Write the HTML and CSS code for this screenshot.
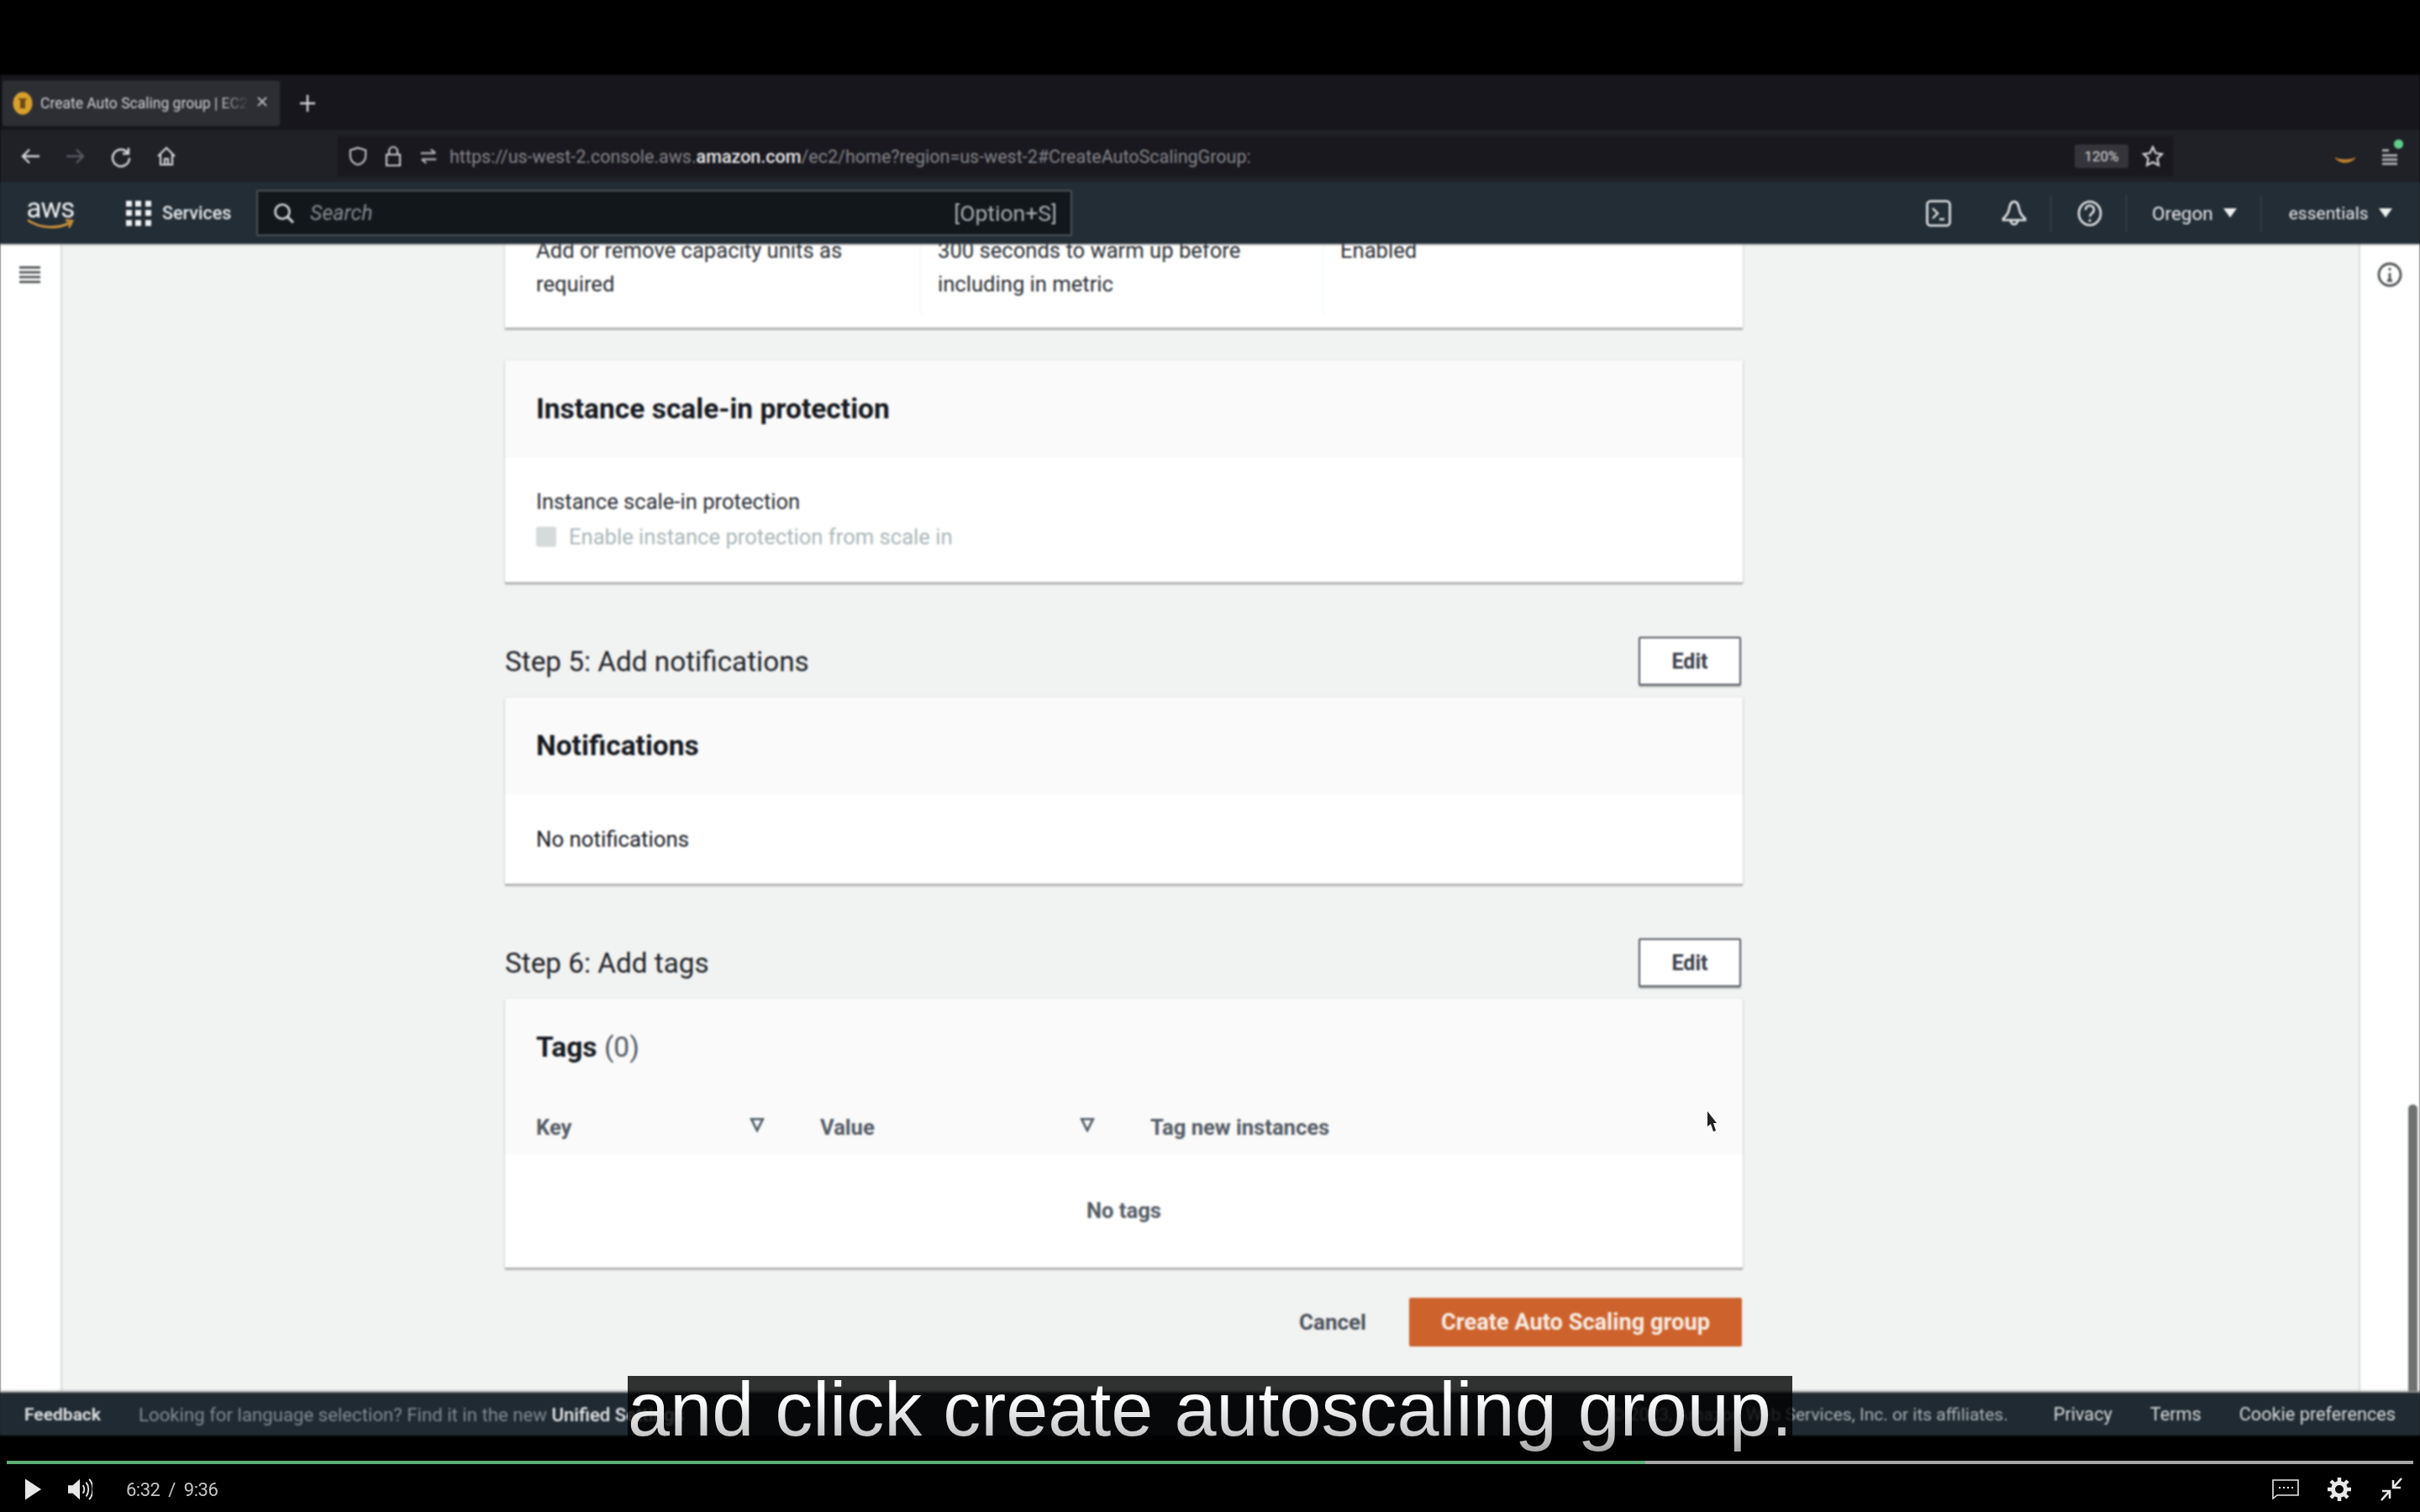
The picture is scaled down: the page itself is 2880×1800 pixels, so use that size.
FILE: index.html
```html
<!DOCTYPE html>
<html lang="en">
<head>
    <meta charset="UTF-8">
    <title>Create Auto Scaling group | EC2</title>
    <link rel="stylesheet" href="styles.css">
</head>
<body>
    <div class="screen">
        <!-- Browser tabs -->
        <div class="tabbar">
            <div class="tab">
                <svg class="favicon" viewBox="0 0 24 28"><ellipse cx="12" cy="14" rx="11.5" ry="13.5" fill="#d9a02c"/><path d="M6 8h12l-3 2v10h-6v-10z" fill="#6b4a12"/></svg>
                <span class="tab-title">Create Auto Scaling group | EC2</span>
                <svg class="tab-close" viewBox="0 0 14 12"><path d="M2 1l10 10M12 1L2 11" stroke="#b9babd" stroke-width="1.8" fill="none"/></svg>
            </div>
            <svg class="tab-plus" viewBox="0 0 20 24"><path d="M10 2v20M1 12h18" stroke="#d5d5d7" stroke-width="2.4" fill="none"/></svg>
        </div>

        <!-- Browser toolbar -->
        <div class="toolbar">
            <div class="nav-buttons">
                <svg viewBox="0 0 24 24"><path d="M23 12H3M11 4l-8 8 8 8" stroke="#d8d8da" stroke-width="2.4" fill="none"/></svg>
                <svg viewBox="0 0 24 24"><path d="M1 12h20M13 4l8 8-8 8" stroke="#5a5a60" stroke-width="2.4" fill="none"/></svg>
                <svg viewBox="0 0 24 24"><path d="M20 8a10 10 0 1 0 2 6M21 2v7h-7" stroke="#d8d8da" stroke-width="2.4" fill="none"/></svg>
                <svg viewBox="0 0 24 24"><path d="M2 12L12 2l10 10M5 10v12h14V10M10 22v-7h4v7" stroke="#d8d8da" stroke-width="2.2" fill="none"/></svg>
            </div>
            <div class="urlbar">
                <svg class="url-icon" viewBox="0 0 24 26"><path d="M12 2l10 3v8c0 6-5 10-10 11C7 23 2 19 2 13V5z" stroke="#c8c8cb" stroke-width="2.2" fill="none"/></svg>
                <svg class="url-icon" viewBox="0 0 22 26"><path d="M6 11V7a5 5 0 0 1 10 0v4M3 11h16v13H3z" stroke="#c8c8cb" stroke-width="2.2" fill="none"/></svg>
                <svg class="url-icon" viewBox="0 0 24 22"><path d="M2 7h18M15 2l6 5M22 15H4M9 20l-6-5" stroke="#b5b5b9" stroke-width="2.4" fill="none"/></svg>
                <div class="url-text">https://us-west-2.console.aws.<b>amazon.com</b>/ec2/home?region=us-west-2#CreateAutoScalingGroup:</div>
                <span class="zoom-badge">120%</span>
                <svg class="star" viewBox="0 0 26 26"><path d="M13 2l3.4 7.3 7.6 1-5.600 5.400 1.500 8L13 20l-6.900 3.700 1.500-8L2 10.300l7.600-1z" stroke="#d8d8da" stroke-width="2.2" fill="none"/></svg>
            </div>
            <div class="extensions">
                <svg class="smile" viewBox="0 0 26 10"><path d="M1 2c6 7 18 7 24 0-6 3-18 3-24 0z" fill="#c98a2c" stroke="#c98a2c"/></svg>
                <span class="menu-wrap">
                    <svg class="menu-icon" viewBox="0 0 20 22"><path d="M1 4h8M1 10h18M1 15h18M1 20h18" stroke="#c2c2c5" stroke-width="2.6"/></svg>
                    <i class="menu-dot"></i>
                </span>
            </div>
        </div>

        <!-- AWS console header -->
        <header class="console-nav">
            <div class="aws-logo">
                <span class="aws-word">aws</span>
                <svg viewBox="0 0 56 14"><path d="M1 2c14 10 36 11 50 3M46 2l8 1-4 8" stroke="#d99a3c" stroke-width="2.600" fill="none"/></svg>
            </div>
            <svg class="services-grid" viewBox="0 0 30 30" fill="#eef0f1">
                <rect x="0" y="0" width="7" height="7"/><rect x="11" y="0" width="7" height="7"/><rect x="23" y="0" width="7" height="7"/>
                <rect x="0" y="11" width="7" height="7"/><rect x="11" y="11" width="7" height="7"/><rect x="23" y="11" width="7" height="7"/>
                <rect x="0" y="23" width="7" height="7"/><rect x="11" y="23" width="7" height="7"/><rect x="23" y="23" width="7" height="7"/>
            </svg>
            <span class="services-label">Services</span>
            <div class="search">
                <svg viewBox="0 0 26 26"><circle cx="11" cy="11" r="8.500" stroke="#d4d6d8" stroke-width="2.600" fill="none"/><path d="M17 17l7 7" stroke="#d4d6d8" stroke-width="3"/></svg>
                <span class="search-hint">Search</span>
                <span class="search-key">[Option+S]</span>
            </div>
            <div class="nav-right">
                <svg class="nav-icon" viewBox="0 0 30 32"><rect x="1.500" y="1.500" width="27" height="29" rx="4" stroke="#e6e8ea" stroke-width="2.600" fill="none"/><path d="M8 10l6 6-6 6M16 23h6" stroke="#e6e8ea" stroke-width="2.400" fill="none"/></svg>
                <svg class="nav-icon nav-bell" viewBox="0 0 30 32"><path d="M15 2c-4 0-5 4-6 9-1 5-3 8-7 11v2h26v-2c-4-3-6-6-7-11-1-5-2-9-6-9zM11 25a4 4 0 0 0 8 0" stroke="#e6e8ea" stroke-width="2.600" fill="none"/></svg>
                <i class="nav-sep"></i>
                <svg class="nav-icon nav-help" viewBox="0 0 30 32"><ellipse cx="15" cy="16" rx="13" ry="14" stroke="#e6e8ea" stroke-width="2.600" fill="none"/><path d="M10 12c0-7 10-7 10 0 0 4-5 4-5 8M15 23v3" stroke="#e6e8ea" stroke-width="2.600" fill="none"/></svg>
                <i class="nav-sep"></i>
                <span class="nav-menu nav-region">Oregon<i class="caret"></i></span>
                <i class="nav-sep"></i>
                <span class="nav-menu nav-account">essentials<i class="caret"></i></span>
            </div>
        </header>

        <div class="console-body">
            <aside class="rail rail-left">
                <svg class="hamburger" viewBox="0 0 26 24"><path d="M0 3h26M0 9h26M0 15h26M0 21h26" stroke="#4f5253" stroke-width="2.800"/></svg>
            </aside>

            <main class="content">
                <section class="card card-scaling">
                    <div class="scaling-col">Add or remove capacity units as required</div>
                    <div class="scaling-col">300 seconds to warm up before including in metric</div>
                    <div class="scaling-col">Enabled</div>
                </section>

                <section class="card card-protection">
                    <h2 class="card-header">Instance scale-in protection</h2>
                    <div class="card-body">
                        <div class="field-label">Instance scale-in protection</div>
                        <label class="check-row"><i class="checkbox"></i>Enable instance protection from scale in</label>
                    </div>
                </section>

                <div class="step-row">
                    <h3 class="step-title">Step 5: Add notifications</h3>
                    <button class="btn-edit">Edit</button>
                </div>
                <section class="card">
                    <h2 class="card-header">Notifications</h2>
                    <div class="card-body card-body-short">No notifications</div>
                </section>

                <div class="step-row">
                    <h3 class="step-title">Step 6: Add tags</h3>
                    <button class="btn-edit">Edit</button>
                </div>
                <section class="card">
                    <h2 class="card-header">Tags <span class="count">(0)</span></h2>
                    <div class="tags-head">
                        <div class="tags-cell">Key<svg viewBox="0 0 16 16"><path d="M2 2h12l-6 12z" stroke="#4f5b66" stroke-width="2.400" fill="none"/></svg></div>
                        <div class="tags-cell">Value<svg viewBox="0 0 16 16"><path d="M2 2h12l-6 12z" stroke="#4f5b66" stroke-width="2.400" fill="none"/></svg></div>
                        <div class="tags-cell">Tag new instances</div>
                    </div>
                    <div class="tags-empty">No tags</div>
                </section>

                <div class="form-actions">
                    <button class="btn-cancel">Cancel</button>
                    <button class="btn-create">Create Auto Scaling group</button>
                </div>
            </main>

            <aside class="rail rail-right">
                <svg class="info-icon" viewBox="0 0 30 30"><circle cx="15" cy="15" r="13" stroke="#4d5052" stroke-width="2.800" fill="none"/><path d="M15 7v3M15 13v9M12 22h6" stroke="#4d5052" stroke-width="2.800" fill="none"/></svg>
                <i class="scroll-thumb"></i>
            </aside>
        </div>

        <footer class="console-footer">
            <span class="footer-feedback">Feedback</span>
            <span class="footer-note">Looking for language selection? Find it in the new <b>Unified Settings</b></span>
            <span class="footer-copy">© 2023, Amazon Web Services, Inc. or its affiliates.</span>
            <span class="footer-link">Privacy</span>
            <span class="footer-link">Terms</span>
            <span class="footer-link">Cookie preferences</span>
        </footer>
    </div>

    <!-- Video player -->
    <div class="player">
        <div class="progress"><div class="progress-fill"></div></div>
        <div class="player-row">
            <svg class="ctl-play" viewBox="0 0 22 28"><path d="M1 1l20 13L1 27z" fill="#e8e8e8"/></svg>
            <svg class="ctl-volume" viewBox="0 0 32 30"><path d="M1 10h6l9-8v26l-9-8H1z" fill="#e8e8e8"/><path d="M20 10c2 3 2 7 0 10M24 6c4 5 4 13 0 18M28 2c6 7 6 19 0 26" stroke="#e8e8e8" stroke-width="2" fill="none"/></svg>
            <span class="ctl-time">6:32&nbsp; /&nbsp; 9:36</span>
            <div class="player-right">
                <svg class="ctl-captions" viewBox="0 0 32 24"><path d="M1 1h30v18H6l-5 4z" stroke="#e8e8e8" stroke-width="1.600" fill="none"/><path d="M8 10h2M13 10h2M18 10h2M23 10h2" stroke="#e8e8e8" stroke-width="2"/></svg>
                <svg class="ctl-gear" viewBox="0 0 28 28"><circle cx="14" cy="14" r="7.500" stroke="#e8e8e8" stroke-width="5" fill="none"/><path d="M14 0v6M14 22v6M0 14h6M22 14h6M4 4l4 4M20 20l4 4M24 4l-4 4M8 20l-4 4" stroke="#e8e8e8" stroke-width="4.500"/></svg>
                <svg class="ctl-exit" viewBox="0 0 28 28"><path d="M26 1l-9 10M16 3v9h9M2 27l9-10M12 25v-9H3" stroke="#e8e8e8" stroke-width="2.600" fill="none"/></svg>
            </div>
        </div>
    </div>

    <!-- Pointer and burned-in caption sit over the video -->
    <svg class="pointer" viewBox="0 0 14 26"><path d="M1 1l11 14H8l3 9-3 1-3-9-4 3z" fill="#222"/></svg>
    <div class="caption"><span class="caption-text">and click create autoscaling group.</span></div>
</body>
</html>
```

FILE: styles.css
```css
* {
    box-sizing: border-box;
}

html, body {
    margin: 0;
    height: 1800px;
    overflow: hidden;
    background-color: #000;
}

body {
    padding-top: 89px;
    font-family: 'Roboto', 'Liberation Sans', sans-serif;
    position: relative;
}

i {
    display: block;
    font-style: normal;
}

svg {
    display: block;
    flex: none;
}

h2, h3 {
    margin: 0;
}

button {
    font-family: inherit;
    border: none;
    cursor: pointer;
}

.screen {
    display: flex;
    flex-direction: column;
    height: 1620px;
    filter: blur(0.8px);
}

/* browser tabs */
.tabbar {
    display: flex;
    align-items: center;
    height: 66px;
    padding: 7px 0 5px 3px;
    background-color: #17161c;
}

.tab {
    display: flex;
    align-items: center;
    width: 330px;
    height: 54px;
    padding: 0 14px 0 12px;
    background-color: #2d2e34;
    border-radius: 3px;
}

.favicon {
    width: 24px;
    height: 28px;
    margin-right: 9px;
}

.tab-title {
    flex: 1;
    overflow: hidden;
    white-space: nowrap;
    font-size: 17.5px;
    color: #d2d2d5;
    -webkit-mask-image: linear-gradient(to right, #000 85%, transparent);
    mask-image: linear-gradient(to right, #000 85%, transparent);
}

.tab-close {
    width: 14px;
    height: 12px;
    margin-left: 8px;
    margin-top: -4px;
}

.tab-plus {
    width: 20px;
    height: 24px;
    margin-left: 23px;
}

/* browser toolbar */
.toolbar {
    display: flex;
    align-items: center;
    height: 62px;
    background-color: #1f2127;
}

.nav-buttons {
    display: flex;
    align-items: center;
    gap: 30px;
    width: 402px;
    padding-left: 24px;
}

.nav-buttons svg {
    width: 24px;
    height: 28px;
}

.urlbar {
    display: flex;
    align-items: center;
    width: 2184px;
    height: 48px;
    padding: 0 11px 0 13px;
    background-color: #19181e;
}

.url-icon {
    width: 22px;
    height: 26px;
    margin-right: 20px;
}

.url-text {
    flex: 1;
    margin-left: -6px;
    font-size: 21.5px;
    color: #85858b;
    white-space: nowrap;
}

.url-text b {
    color: #e8e8ea;
    font-weight: 500;
}

.zoom-badge {
    width: 64px;
    height: 28px;
    margin-right: 16px;
    background-color: #35343b;
    border-radius: 3px;
    font-size: 17px;
    line-height: 28px;
    text-align: center;
    color: #d8d8da;
}

.star {
    width: 26px;
    height: 26px;
}

.extensions {
    flex: 1;
    display: flex;
    align-items: center;
    justify-content: flex-end;
    padding-right: 26px;
}

.smile {
    width: 26px;
    height: 10px;
    margin-top: 10px;
    margin-right: 30px;
}

.menu-wrap {
    position: relative;
}

.menu-icon {
    width: 20px;
    height: 24px;
}

.menu-dot {
    position: absolute;
    top: -8px;
    right: -6px;
    width: 11px;
    height: 11px;
    border-radius: 50%;
    background-color: #5fd08a;
}

/* console header */
.console-nav {
    display: flex;
    align-items: center;
    height: 73px;
    padding-left: 32px;
    background-color: #222d36;
    box-shadow: 0 1px 2px #666;
    position: relative;
    z-index: 1;
    color: #e8eaec;
}

.aws-logo {
    display: flex;
    flex-direction: column;
    align-items: center;
    width: 56px;
    margin-right: 62px;
}

.aws-logo svg {
    width: 56px;
    height: 14px;
    margin-top: -3px;
}

.aws-word {
    font-size: 33px;
    line-height: 30px;
    letter-spacing: -1px;
    color: #eef0f1;
}

.services-grid {
    width: 30px;
    height: 30px;
    margin-right: 13px;
}

.services-label {
    width: 112px;
    font-size: 21.5px;
    font-weight: 500;
}

.search {
    display: flex;
    align-items: center;
    width: 971px;
    height: 55px;
    padding: 0 16px 0 18px;
    background-color: #12171c;
    border: 2px solid #4b5359;
    border-radius: 2px;
}

.search svg {
    width: 26px;
    height: 26px;
    margin-right: 18px;
}

.search-hint {
    flex: 1;
    font-size: 25px;
    font-style: italic;
    color: #878c91;
}

.search-key {
    font-size: 26.5px;
    color: #a9adb1;
}

.nav-right {
    flex: 1;
    display: flex;
    align-items: center;
    padding-left: 1016px;
}

.nav-icon {
    width: 30px;
    height: 32px;
}

.nav-bell {
    margin-left: 60px;
}

.nav-help {
    margin-left: 31px;
}

.nav-sep {
    width: 1px;
    height: 44px;
    margin-left: 28px;
    background-color: #3a464f;
}

.nav-menu {
    display: flex;
    align-items: center;
    white-space: nowrap;
}

.nav-region {
    margin-left: 30px;
    font-size: 22.5px;
}

.nav-account {
    margin-left: 33px;
    font-size: 21px;
}

.caret {
    width: 0;
    height: 0;
    margin-left: 12px;
    border-left: 8px solid transparent;
    border-right: 8px solid transparent;
    border-top: 11px solid #eef0f1;
}

/* console body */
.console-body {
    flex: 1;
    display: flex;
    overflow: hidden;
    background-color: #f1f2f2;
}

.rail {
    flex: none;
    width: 73px;
    background-color: #fff;
    display: flex;
    flex-direction: column;
}

.rail-left {
    width: 74px;
    border-right: 2px solid #d9dbdb;
    padding: 25px 0 0 23px;
}

.rail-right {
    border-left: 2px solid #d9dbdb;
    padding: 22px 3px 0 20px;
}

.hamburger {
    width: 25px;
    height: 24px;
}

.info-icon {
    width: 30px;
    height: 30px;
}

.scroll-thumb {
    width: 11px;
    height: 343px;
    margin-top: auto;
    align-self: flex-end;
    border-radius: 5px 5px 0 0;
    background-color: #6f7170;
}

.content {
    flex: 1;
    padding-left: 527px;
    padding-right: 733px;
    margin-top: -12px;
    font-size: 25.6px;
    color: #16191f;
}

.card {
    background-color: #fff;
    box-shadow: 0 3px 1px rgba(0, 0, 0, 0.18), 0 1px 3px rgba(0, 0, 0, 0.2);
}

.card-header {
    height: 116px;
    padding: 0 37px;
    background-color: #fafafa;
    font-size: 33.5px;
    font-weight: 700;
    line-height: 116px;
}

.count {
    font-weight: 400;
    color: #545b64;
}

.card-scaling {
    display: grid;
    grid-template-columns: 495px 479px 1fr;
    height: 112px;
    line-height: 40px;
    margin-bottom: 39px;
}

.scaling-col {
    padding: 0 70px 0 37px;
    height: 97px;
    color: #2a2e33;
    border-right: 1px solid #f1f2f3;
}

.scaling-col + .scaling-col {
    padding-left: 20px;
}

.scaling-col:last-child {
    border-right: none;
}

.card-protection .card-body {
    height: 148px;
    padding: 34px 37px 0;
}

.field-label {
    line-height: 36px;
    color: #2a2e33;
}

.check-row {
    display: flex;
    align-items: center;
    margin-top: 9px;
    color: #aab7b8;
}

.checkbox {
    width: 24px;
    height: 24px;
    margin-right: 15px;
    background-color: #d5dbdb;
    border-radius: 3px;
}

.card-body-short {
    height: 106px;
    padding: 35px 37px 0;
    font-size: 25.8px;
    line-height: 36px;
}

.step-row {
    display: flex;
    align-items: center;
    justify-content: space-between;
    height: 58px;
    margin-top: 65px;
    margin-bottom: 14px;
}

.step-title {
    font-size: 33.3px;
    font-weight: 400;
    color: #1f2328;
}

.btn-edit {
    width: 122px;
    height: 58px;
    margin-right: 2px;
    background-color: #fff;
    border: 2px solid #545b64;
    border-radius: 2px;
    box-shadow: 0 2px 1px rgba(0, 0, 0, 0.25);
    font-size: 25px;
    font-weight: 700;
    color: #3a4048;
}

.tags-head {
    display: grid;
    grid-template-columns: 338px 393px 1fr;
    align-items: center;
    height: 70px;
    padding-left: 37px;
    background-color: #fafafa;
    font-weight: 700;
    color: #545b64;
    padding-top: 3px;
}

.tags-cell {
    display: flex;
    align-items: center;
    justify-content: space-between;
    padding-right: 66px;
}

.tags-cell svg {
    width: 18px;
    height: 18px;
    margin-top: -6px;
}

.tags-empty {
    height: 134px;
    line-height: 132px;
    text-align: center;
    font-weight: 700;
    color: #545b64;
}

.form-actions {
    display: flex;
    align-items: center;
    justify-content: flex-end;
    margin-top: 36px;
    padding-right: 1px;
}

.btn-cancel {
    padding: 0;
    margin-right: 51px;
    background: none;
    font-size: 26px;
    font-weight: 700;
    color: #4b5159;
}

.btn-create {
    width: 396px;
    height: 58px;
    background-color: #cd622c;
    border-radius: 2px;
    font-size: 27.2px;
    font-weight: 700;
    color: #f7ece4;
}

/* console footer */
.console-footer {
    display: flex;
    align-items: center;
    height: 51px;
    padding-left: 29px;
    background-color: #1f2a32;
    box-shadow: 0 -2px 2px #8a8d8f;
    position: relative;
    font-size: 21px;
    color: #d8dbdd;
    white-space: nowrap;
}

.footer-feedback {
    margin-right: 45px;
    font-weight: 700;
}

.footer-note {
    font-size: 22.2px;
    color: #7f8a92;
}

.footer-note b {
    color: #e8eaec;
    font-weight: 500;
}

.footer-copy {
    margin-left: auto;
    margin-right: 54px;
    color: #aab1b6;
}

.footer-link {
    margin-right: 45px;
    font-size: 21.7px;
}

.footer-link:last-child {
    margin-right: 29px;
}

/* video player */
.player {
    height: 91px;
    padding: 30px 8px 0;
}

.progress {
    height: 4px;
    background-color: #a6a6a6;
}

.progress-fill {
    width: 1950px;
    height: 4px;
    background-color: #5fae74;
}

.player-row {
    display: flex;
    align-items: center;
    height: 60px;
    padding-left: 21px;
    filter: blur(0.4px);
}

.ctl-play {
    width: 21px;
    height: 28px;
    margin-right: 30px;
}

.ctl-volume {
    width: 30px;
    height: 28px;
    margin-right: 40px;
}

.ctl-time {
    font-size: 22px;
    letter-spacing: -0.5px;
    color: #c4c4c4;
}

.player-right {
    margin-left: auto;
    display: flex;
    align-items: center;
    gap: 34px;
    padding-right: 12px;
}

.ctl-captions {
    width: 32px;
    height: 24px;
}

.ctl-gear {
    width: 28px;
    height: 28px;
}

.ctl-exit {
    width: 28px;
    height: 28px;
}

/* things on top of the video */
.pointer {
    position: absolute;
    left: 2031px;
    top: 1322px;
    width: 14px;
    height: 26px;
}

.caption {
    position: absolute;
    left: 747px;
    top: 1638px;
    width: 1386px;
    height: 100px;
    background-color: rgba(0, 0, 0, 0.8);
    white-space: nowrap;
    text-align: center;
}

.caption-text {
    display: block;
    padding-bottom: 20px;
    font-family: 'Liberation Sans', sans-serif;
    font-size: 90px;
    line-height: 80px;
    background-image: linear-gradient(to bottom, #fff 25%, #c8c8c8 70%, #a8a8a8 90%);
    -webkit-background-clip: text;
    background-clip: text;
    color: transparent;
}
```
